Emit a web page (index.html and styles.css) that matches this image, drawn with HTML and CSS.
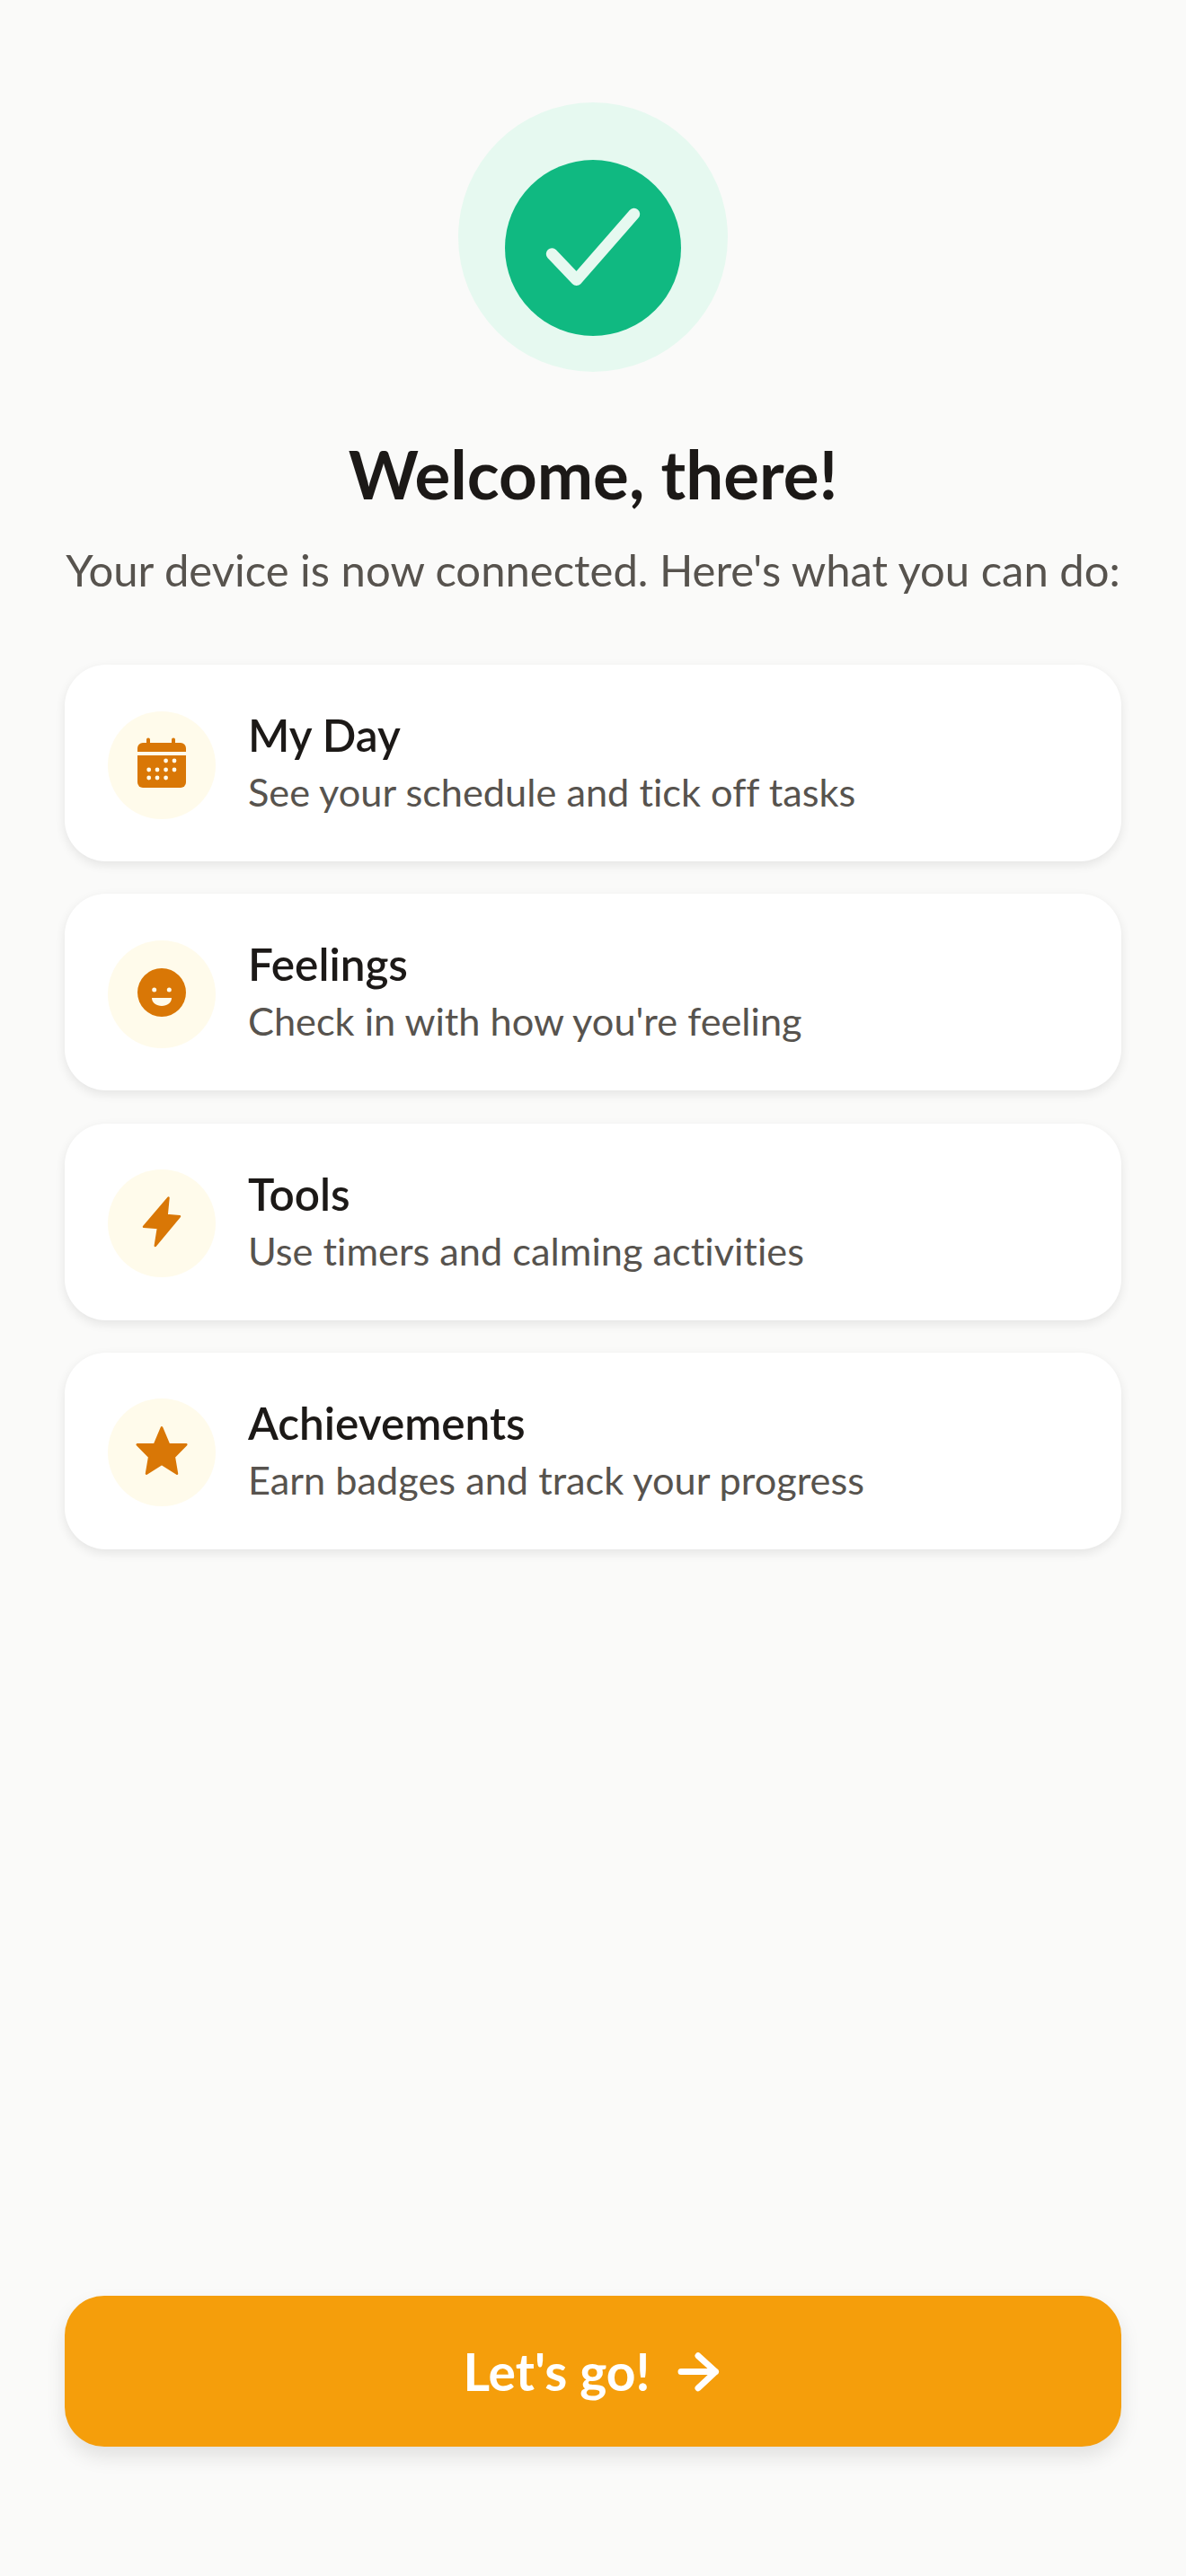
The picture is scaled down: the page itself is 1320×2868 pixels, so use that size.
FILE: index.html
```html
<!DOCTYPE html>
<html lang="en">
<head>
    <meta charset="UTF-8">
    <title>Welcome</title>
    <link rel="stylesheet" href="styles.css">
</head>
<body>
    <div class="screen">
        <div class="hero-ring">
            <div class="hero-disc">
                <svg width="196" height="196" viewBox="0 0 196 196"><path d="M52.3 104.7 L79.7 133.5 L143.7 60.3" fill="none" stroke="#e6f9f0" stroke-width="13" stroke-linecap="round" stroke-linejoin="round"/></svg>
            </div>
        </div>
        <h1>Welcome, there!</h1>
        <p class="lead">Your device is now connected. Here's what you can do:</p>

        <div class="cards">
            <div class="card">
                <div class="card-icon">
                    <svg width="66" height="66" viewBox="0 0 66 66">
                        <path class="ic" d="M16 6.5a2 2 0 0 1 4 0V10h8v0h8v0h8V6.5a2 2 0 0 1 4 0V10h6a6 6 0 0 1 6 6v4H6v-4a6 6 0 0 1 6-6h4z"/>
                        <path class="ic" d="M6 24h54v30a6 6 0 0 1-6 6H12a6 6 0 0 1-6-6z"/>
                        <g class="dots">
                            <circle cx="37.6" cy="30" r="2.4"/><circle cx="47" cy="30" r="2.4"/>
                            <circle cx="18.7" cy="40" r="2.4"/><circle cx="28" cy="40" r="2.4"/><circle cx="37.6" cy="40" r="2.4"/><circle cx="47" cy="40" r="2.4"/>
                            <circle cx="18.7" cy="49" r="2.4"/><circle cx="28" cy="49" r="2.4"/><circle cx="37.6" cy="49" r="2.4"/>
                        </g>
                    </svg>
                </div>
                <div class="card-text">
                    <h2>My Day</h2>
                    <p>See your schedule and tick off tasks</p>
                </div>
            </div>
            <div class="card">
                <div class="card-icon">
                    <svg width="66" height="66" viewBox="0 0 66 66">
                        <circle class="ic" cx="33" cy="33" r="27"/>
                        <g class="dots">
                            <circle cx="24.7" cy="30" r="2.5"/><circle cx="41.3" cy="30" r="2.5"/>
                            <path d="M22 39H44C44 44.5 39 48 33 48C27 48 22 44.5 22 39Z"/>
                        </g>
                    </svg>
                </div>
                <div class="card-text">
                    <h2>Feelings</h2>
                    <p>Check in with how you're feeling</p>
                </div>
            </div>
            <div class="card">
                <div class="card-icon">
                    <svg width="66" height="66" viewBox="0 0 66 66">
                        <path class="ic rnd" d="M40.5 6.5 L13 38.8 L29 40 L25.8 60 L53 27.2 L38.6 26Z"/>
                    </svg>
                </div>
                <div class="card-text">
                    <h2>Tools</h2>
                    <p>Use timers and calming activities</p>
                </div>
            </div>
            <div class="card">
                <div class="card-icon">
                    <svg width="66" height="66" viewBox="0 0 66 66">
                        <path class="ic rnd" d="M33 7.3 L41 26.3 L60.3 26.3 L46.8 40 L50 58.7 L33 48 L16 58.7 L19.2 40 L5.7 26.3 L25 26.3Z"/>
                    </svg>
                </div>
                <div class="card-text">
                    <h2>Achievements</h2>
                    <p>Earn badges and track your progress</p>
                </div>
            </div>
        </div>

        <button class="go">
            <span>Let's go!</span>
            <svg width="55" height="55" viewBox="0 0 55 55"><path d="M8 27.5H46.5M27 9.8L46.5 27.5L27 45.8" fill="none" stroke="#fff" stroke-width="7" stroke-linecap="round" stroke-linejoin="round"/></svg>
        </button>
    </div>
</body>
</html>
```

FILE: styles.css
```css
* { box-sizing: border-box; }
html, body { margin: 0; padding: 0; }
body { font-family: 'Lato', 'Noto Sans', sans-serif; font-variant-ligatures: none; background: #fafaf9; }
.screen { height: 2868px; padding: 114px 72px 144px; display: flex; flex-direction: column; align-items: center; }
.hero-ring { width: 300px; height: 300px; padding-top: 24px; border-radius: 50%; background: #e6f9f0; display: flex; align-items: center; justify-content: center; flex-shrink: 0; }
.hero-disc { width: 196px; height: 196px; border-radius: 50%; background: #10b981; }
.hero-disc svg { display: block; }
h1 { margin: 69px 0 0; font-size: 74.5px; line-height: 88px; font-weight: 700; color: #1c1917; text-align: center; }
.lead { margin: 30px 0 0; font-size: 49px; line-height: 66px; color: #57534e; text-align: center; white-space: nowrap; }
.cards { width: 100%; margin-top: 73px; display: flex; flex-direction: column; gap: 36.3px; }
.card { height: 219px; padding: 0 48px; display: flex; align-items: center; gap: 36px; background: #fff; border-radius: 46px; box-shadow: 0 4px 12px rgba(0,0,0,.09); }
.card-icon { width: 120px; height: 120px; padding-bottom: 4px; margin-top: 4px; border-radius: 50%; background: #fffbeb; display: flex; align-items: center; justify-content: center; flex-shrink: 0; }
.card-icon svg { display: block; }
.ic { fill: #d97706; }
.rnd { stroke: #d97706; stroke-width: 2.5; stroke-linejoin: round; }
.dots { fill: #fffbeb; }
.card-text h2 { margin: 0; font-size: 49.5px; line-height: 60px; font-weight: 600; color: #1c1917; }
.card-text p { margin: 3px 0 0; font-size: 43.3px; line-height: 60px; color: #57534e; }
.go { width: 100%; height: 168px; margin-top: auto; border: none; border-radius: 44px; background: #f59e0b; color: #fff; font-family: inherit; font-size: 57px; font-weight: 700; display: flex; align-items: center; justify-content: center; gap: 26px; box-shadow: 0 11px 22px rgba(0,0,0,.1); }
.go svg { display: block; }
```
